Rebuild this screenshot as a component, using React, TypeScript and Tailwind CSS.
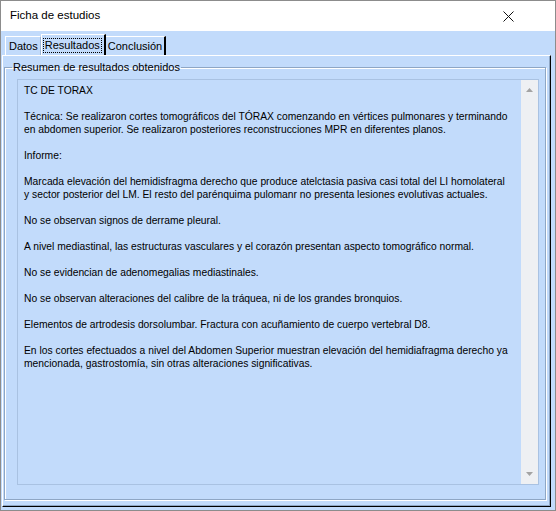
import React from 'react';

const paragraphs: string[][] = [
  ['TC DE TORAX'],
  [
    'Técnica: Se realizaron cortes tomográficos del TÓRAX comenzando en vértices pulmonares y terminando',
    'en abdomen superior. Se realizaron posteriores reconstrucciones MPR en diferentes planos.',
  ],
  ['Informe:'],
  [
    'Marcada elevación del hemidisfragma derecho que produce atelctasia pasiva casi total del LI homolateral',
    'y sector posterior del LM. El resto del parénquima pulomanr no presenta lesiones evolutivas actuales.',
  ],
  ['No se observan signos de derrame pleural.'],
  ['A nivel mediastinal, las estructuras vasculares y el corazón presentan aspecto tomográfico normal.'],
  ['No se evidencian de adenomegalias mediastinales.'],
  ['No se observan alteraciones del calibre de la tráquea, ni de los grandes bronquios.'],
  ['Elementos de artrodesis dorsolumbar. Fractura con acuñamiento de cuerpo vertebral D8.'],
  [
    'En los cortes efectuados a nivel del Abdomen Superior muestran elevación del hemidiafragma derecho ya',
    'mencionada, gastrostomía, sin otras alteraciones significativas.',
  ],
];

function CloseIcon() {
  return (
    <svg width="11" height="11" viewBox="0 0 11 11" className="block">
      <path d="M0.5 0.5 L10.5 10.5 M10.5 0.5 L0.5 10.5" stroke="#111" strokeWidth="1" fill="none" />
    </svg>
  );
}

function Arrow({ down }: { down?: boolean }) {
  return (
    <svg width="7" height="4" viewBox="0 0 7 4" className="block">
      <path d={down ? 'M0 0 H7 L3.5 4 Z' : 'M0 4 H7 L3.5 0 Z'} fill="#a3a3a3" />
    </svg>
  );
}

function App() {
  return (
    <div
      className="w-[556px] h-[511px] flex flex-col border border-[#8c8c8c] bg-[#c2dbfb] text-black overflow-hidden"
      style={{ fontFamily: '"Liberation Sans", Arial, sans-serif' }}
    >
      {/* title bar */}
      <div className="h-[30px] bg-white flex items-center justify-between pl-[9px] pr-[41px] shrink-0">
        <span className="text-[11.5px] leading-none">Ficha de estudios</span>
        <CloseIcon />
      </div>

      <div className="flex-1 flex flex-col pt-[4px] pl-[1px] pr-[4px] pb-[3px] text-[11px] min-h-0">
        {/* tabs */}
        <div className="flex items-end h-[20px] pl-[3px]">
          <div className="h-[19px] pl-[3px] pr-[2px] flex items-center border-l border-t border-white border-r border-r-[#9fb6d4]">
            Datos
          </div>
          <div className="h-[21px] pl-[1px] pr-[2px] flex items-center border-l border-t border-white border-r-2 border-r-black">
            <span className="px-[1px] border border-dotted border-black leading-[13px]">Resultados</span>
          </div>
          <div className="h-[19px] px-[2px] flex items-center border-t border-white border-r-2 border-r-black">
            Conclusión
          </div>
        </div>

        {/* tab pane */}
        <div className="flex-1 min-h-0 flex flex-col border-l border-t border-white border-r border-b border-r-black border-b-black shadow-[inset_-1px_-1px_0_#8ea6c4] pl-[1px] pr-[4px] pb-[6px]">
          <fieldset className="flex-1 min-w-0 min-h-0 flex flex-col border border-[#8ea6c4] shadow-[inset_1px_1px_0_#fff,1px_1px_0_#fff] mt-[5px] pl-[12px] pr-[6px] pt-[5px] pb-[14px]">
            <legend className="ml-[-5px] px-[1px] leading-[13px]">Resumen de resultados obtenidos</legend>
            <div className="flex-1 min-h-0 min-w-0 flex border border-[#a9c2e2]">
              <div className="flex-1 min-w-0 pl-[6px] pt-[4px] text-[10.3px] leading-[13px] whitespace-nowrap overflow-hidden">
                {paragraphs.map((p, i) => (
                  <p key={i} className="mb-[13px]">
                    {p.map((line, j) => (
                      <React.Fragment key={j}>
                        {line}
                        {j < p.length - 1 && <br />}
                      </React.Fragment>
                    ))}
                  </p>
                ))}
              </div>
              <div className="w-[17px] shrink-0 bg-[#eef0f3] flex flex-col items-center justify-between py-[8px]">
                <Arrow />
                <Arrow down />
              </div>
            </div>
          </fieldset>
        </div>
      </div>
    </div>
  );
}

export default App;
